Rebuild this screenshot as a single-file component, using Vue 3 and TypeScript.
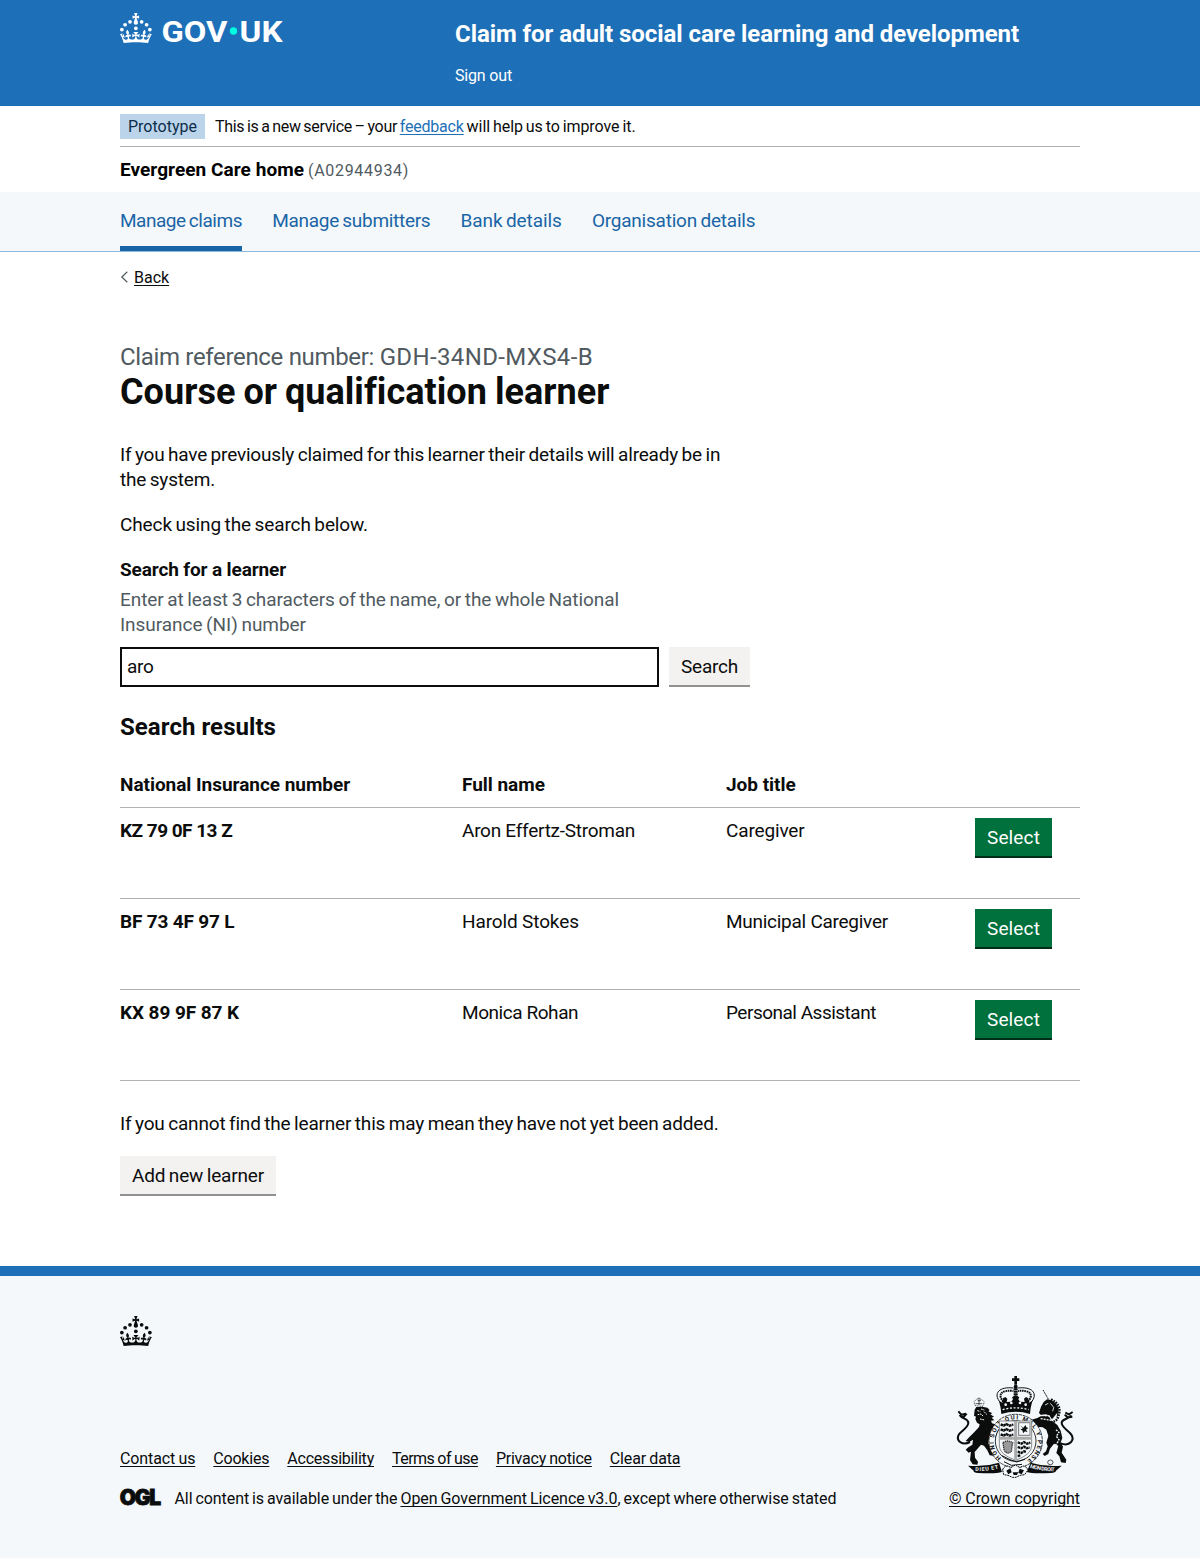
<script setup lang="ts">
interface Label {
  text: string
  tracking: number
}

interface Learner {
  ni: Label
  name: Label
  job: Label
}

const label = (text: string, tracking = 0): Label => ({ text, tracking })
const track = (item: Label) => ({ letterSpacing: `${item.tracking}px` })

const navigation: Label[] = [
  label('Manage claims', -0.477),
  label('Manage submitters', -0.306),
  label('Bank details', -0.117),
  label('Organisation details', -0.22),
]

const learners: Learner[] = [
  { ni: label('KZ 79 0F 13 Z', -0.52), name: label('Aron Effertz-Stroman', -0.263), job: label('Caregiver', -0.15) },
  { ni: label('BF 73 4F 97 L', -0.18), name: label('Harold Stokes', -0.13), job: label('Municipal Caregiver', -0.27) },
  { ni: label('KX 89 9F 87 K', -0.08), name: label('Monica Rohan', -0.44), job: label('Personal Assistant', -0.5) },
]

const footerLinks: Label[] = [
  label('Contact us', -0.12),
  label('Cookies', -0.2),
  label('Accessibility', -0.22),
  label('Terms of use', -0.52),
  label('Privacy notice', -0.23),
  label('Clear data', -0.15),
]

const crown =
  'M33.1,9.8c.2-.1.3-.3.5-.5l4.6,2.4v-6.8l-4.6,1.5c-.1-.2-.3-.3-.5-.5l1.9-5.9h-6.7l1.9,5.9c-.2.1-.3.3-.5.5l-4.6-1.5v6.8l4.6-2.4c.1.2.3.3.5.5l-2.6,8c-.9,2.8,1.2,5.7,4.1,5.7h0c3,0,5.1-2.9,4.1-5.7l-2.6-8ZM37,37.9s-3.4,3.8-4.1,6.1c2.2,0,4.2-.5,6.4-2.8l-.7,8.5c-2-2.8-4.4-4.1-5.7-3.8.1,3.1.5,6.7,5.8,7.2,3.7.3,6.7-1.5,7-3.8.4-2.6-2-4.3-3.7-1.6-1.4-4.5,2.4-6.1,4.9-3.2-1.9-4.5-1.8-7.7,2.4-10.9,3,4,2.6,7.3-1.2,11.1,2.4-1.3,6.2,0,4,4.6-1.2-2.8-3.7-2.2-4.2.2-.3,1.7.7,3.7,3,4.2,1.9.3,4.7-.9,7-5.9-1.3,0-2.4.7-3.9,1.7l2.4-8c.6,2.3,1.4,3.7,2.2,4.5.6-1.6.5-2.8,0-5.3l5,1.8c-2.6,3.6-5.2,8.7-7.3,17.5-7.4-1.1-15.7-1.7-24.5-1.7h0c-8.8,0-17.1.6-24.5,1.7-2.1-8.9-4.7-13.9-7.3-17.5l5-1.8c-.5,2.5-.6,3.7,0,5.3.8-.8,1.6-2.3,2.2-4.5l2.4,8c-1.5-1-2.6-1.7-3.9-1.7,2.3,5,5.2,6.2,7,5.9,2.3-.4,3.3-2.4,3-4.2-.5-2.4-3-3.1-4.2-.2-2.2-4.6,1.6-6,4-4.6-3.7-3.7-4.2-7.1-1.2-11.1,4.2,3.2,4.3,6.4,2.4,10.9,2.5-2.8,6.3-1.3,4.9,3.2-1.8-2.7-4.1-1-3.7,1.6.3,2.3,3.3,4.1,7,3.8,5.4-.5,5.7-4.2,5.8-7.2-1.3-.2-3.7,1-5.7,3.8l-.7-8.5c2.2,2.3,4.2,2.7,6.4,2.8-.7-2.3-4.1-6.1-4.1-6.1h10.6,0Z'
const jewels: [number, number][] = [
  [20, 17.6], [10.2, 23.5], [3.7, 33.2], [31.7, 30.6], [43.3, 17.6], [53.2, 23.5], [59.7, 33.2],
]
</script>

<template>
  <div class="page">
    <header class="header">
      <div class="wrap header-row">
        <svg class="logo" viewBox="0 0 324 60" width="162" height="30" role="img" aria-label="GOV.UK">
          <g fill="#fff">
            <circle v-for="([x, y], i) in jewels" :key="i" :cx="x" :cy="y" r="3.7" />
            <path :d="crown" />
            <text x="83" y="58" textLength="132" lengthAdjust="spacingAndGlyphs" class="logo-text">GOV</text>
            <text x="239" y="58" textLength="86" lengthAdjust="spacingAndGlyphs" class="logo-text">UK</text>
          </g>
          <circle cx="227" cy="36" r="7.3" fill="#00ffe0" />
        </svg>
        <div class="header-content">
          <p class="service">Claim for adult social care learning and development</p>
          <p class="signout">Sign out</p>
        </div>
      </div>
    </header>

    <div class="wrap">
      <div class="phase">
        <span class="tag">Prototype</span>
        <span><span class="phase-a">This is a new service – your </span><a class="phase-link">feedback</a><span class="phase-b"> will help us to improve it.</span></span>
      </div>
      <div class="org"><b>Evergreen Care home</b><span>(A02944934)</span></div>
    </div>

    <nav class="nav">
      <div class="wrap nav-row">
        <a v-for="(item, i) in navigation" :key="item.text" :class="{ current: i === 0 }" :style="track(item)">{{ item.text }}</a>
      </div>
    </nav>

    <main class="wrap main">
      <div class="back">
        <svg width="8" height="12" viewBox="0 0 8 12"><path d="M7.3 .8 1.8 6 7.3 11.2" fill="none" stroke="#505a5f" stroke-width="1.2" /></svg>
        <a>Back</a>
      </div>

      <p class="caption">Claim reference number: <span>GDH-34ND-MXS4-B</span></p>
      <h1>Course or qualification learner</h1>
      <p class="intro"><span class="intro-a">If you have previously claimed for this learner their details will already be in</span> <span class="intro-b">the system.</span></p>
      <p class="check">Check using the search below.</p>

      <label class="label" for="learner">Search for a learner</label>
      <p class="hint"><span class="hint-a">Enter at least 3 characters of the name, or the whole National</span> <span class="hint-b">Insurance (NI) number</span></p>
      <div class="search">
        <input id="learner" type="text" value="aro" />
        <button class="btn grey search-btn">Search</button>
      </div>

      <h2>Search results</h2>
      <table>
        <thead>
          <tr><th class="c1">National Insurance number</th><th class="c2">Full name</th><th class="c3">Job title</th><th></th></tr>
        </thead>
        <tbody>
          <tr v-for="row in learners" :key="row.ni.text">
            <th :style="track(row.ni)">{{ row.ni.text }}</th>
            <td :style="track(row.name)">{{ row.name.text }}</td>
            <td :style="track(row.job)">{{ row.job.text }}</td>
            <td><button class="btn green">Select</button></td>
          </tr>
        </tbody>
      </table>

      <p class="missing">If you cannot find the learner this may mean they have not yet been added.</p>
      <button class="btn grey add">Add new learner</button>
    </main>

    <footer class="footer">
      <div class="wrap">
        <svg class="footer-crown" viewBox="0 0 64 60" width="32" height="30" fill="#0b0c0c">
          <circle v-for="([x, y], i) in jewels" :key="i" :cx="x" :cy="y" r="3.7" />
          <path :d="crown" />
        </svg>
        <div class="footer-row">
          <div>
            <div class="links">
              <a v-for="item in footerLinks" :key="item.text" :style="track(item)">{{ item.text }}</a>
            </div>
            <div class="licence">
              <svg width="41" height="18" viewBox="0 0 41 18" role="img" aria-label="OGL">
                <text class="ogl" x="-.3" y="15.6" textLength="41.5">OGL</text>
              </svg>
              <span><span class="lic-a">All content is available under the </span><a class="lic-b">Open Government Licence v3.0</a><span class="lic-c">, except where otherwise stated</span></span>
            </div>
          </div>
          <div class="copyright">
            <svg class="crest" width="125" height="102" viewBox="36 33 375 306">
              <!-- crown -->
              <path d="M223 33h8v7h7v8h-7v11h-8V48h-7v-8h7z" />
              <circle cx="227" cy="65" r="6" />
              <g fill="none" stroke="#0b0c0c">
                <path d="M182 114C156 84 180 64 220 69M272 114C298 84 274 64 234 69" stroke-width="3" />
                <path d="M190 110C170 86 188 74 220 78M264 110C284 86 266 74 234 78" stroke-width="6" stroke-dasharray="5 2" />
                <path d="M227 70v30" stroke-width="12" stroke-dasharray="6 1.5" />
              </g>
              <path d="M177 107l10 6 2-13 7-4 6 5-2 10 14-1 5-7-3-6 11-6 11 6-3 6 5 7 14 1-2-10 6-5 7 4 2 13 10-6-5 22-2 18q-43-13-86 0l-2-18z" />
              <g fill="#f4f8fb">
                <circle cx="197" cy="119" r="4" /><circle cx="214" cy="114" r="4" /><circle cx="240" cy="114" r="4" /><circle cx="257" cy="119" r="4" />
              </g>
              <path d="M188 134q39-11 78 0" fill="none" stroke="#f4f8fb" stroke-width="4" stroke-dasharray="6 5" />

              <!-- lion -->
              <path d="M106 122l-4-12 6-6 9-5 10 6 6 6-5 13z" fill="none" stroke="#0b0c0c" stroke-width="2" stroke-dasharray="3 2" />
              <path d="M113 107h10M117 98v22M107 116h20" stroke="#0b0c0c" stroke-width="2" />
              <path d="M104 134l5-8 18-1 15 3 7 7-4 4 12 6-6 3 11 7-7 3 8 8-10 1 3 8 14 4 13 14-1 11-13 3 10 8-3 6-14-3-10-7-5 7-2 16 6 17 13 14 1 8-16-2-7-15-10-14-9-3-11 13-8 9 1 17 9 12-2 9-14-1-8-13 3-25-7 3-9-9 8-7 12-8 2-15-11 7-11-3 9-10 18-18 13-14 2-8-8-5-5-11 2-7-6-3z" />
              <path d="M112 137l9 2m2-7l10 3m-20 14l10-2 7 7m2-14l9 9m-21 13l14 3" stroke="#f4f8fb" stroke-width="3" stroke-dasharray="5 2" />
              <path d="M90 231C68 243 49 229 55 211 61 198 84 190 85 174 86 160 66 163 59 150M55 139l9 10 14-3M60 153l11 3 9-10" fill="none" stroke="#0b0c0c" stroke-width="6" />

              <!-- unicorn -->
              <path d="M309 75l17 29" stroke="#0b0c0c" stroke-width="3" stroke-dasharray="4 1.5" />
              <path d="M303 125l8-14 10-8 12 2 14 10 9 15-1 18-6 12 3-17-8 10-8 10-7-11-11-4-15 2-6-6z" />
              <path d="M315 120l10-5M331 115l10 12-3 12" stroke="#f4f8fb" stroke-width="2.5" fill="none" />
              <path d="M333 103q29 14 25 40t-20 27" fill="none" stroke="#0b0c0c" stroke-width="7" stroke-dasharray="5 3" />
              <path d="M302 154l23-2 9 14 18 14 10 17 5 22-5 13 7 13-4 18 14 21-2 10-14-2-5-18-9-10 6-22-13-6-12 15-5 16-11 6-6-6 10-8 5-15-4-11 6-20-6-19-11-7-18-2-7 9-8-1 3-15-7-5 4-9 17-5z" />
              <path d="M305 151l25 2m-28 8l34 5m12 28l9 8-8 12 8 10-6 11-10 11-2 10-6 11 1 12-9 8" fill="none" stroke="#f4f8fb" stroke-width="4" stroke-dasharray="6 3" />
              <path d="M362 235C391 246 404 224 394 209 385 195 364 188 365 173 367 160 387 163 393 151M398 141l-11 7-11-5M397 155l-13 2-10-8" fill="none" stroke="#0b0c0c" stroke-width="6" />
              <ellipse cx="331" cy="292" rx="8" ry="7" fill="none" stroke="#0b0c0c" stroke-width="2" />

              <!-- garter and shield -->
              <circle cx="227" cy="228" r="71" fill="none" stroke="#f4f8fb" stroke-width="18" />
              <circle cx="227" cy="228" r="80" fill="none" stroke="#0b0c0c" stroke-width="2.5" stroke-dasharray="9 2" />
              <circle cx="227" cy="228" r="61" fill="#f4f8fb" stroke="#0b0c0c" stroke-width="2.5" />
              <path id="garter" d="M195 287A66 66 0 1 1 259 287" fill="none" />
              <text class="motto"><textPath href="#garter" startOffset="14" textLength="330">HONI SOIT QUI MAL Y PENSE</textPath></text>
              <path d="M178 168h97v75q0 25-48 43-49-18-49-43z" fill="#f4f8fb" stroke="#777" stroke-width="2.5" />
              <g fill="none" stroke="#0b0c0c" stroke-width="7">
                <path d="M182 178l9 4 8-5 9 5 12-3M182 193l9 4 8-5 9 5 12-3M182 208l9 4 8-5 9 5 12-3" stroke-dasharray="8 1.5" />
                <path d="M233 232l11 4 8-5 9 5 10-3M233 246l11 4 8-5 9 5 8-3M233 260l11 4 8-5 6 2M233 273l9-2" stroke-dasharray="8 1.5" />
              </g>
              <path d="M227 168v116M178 220h97" stroke="#aaa" stroke-width="9" />
              <rect x="236" y="173" width="34" height="38" fill="none" stroke="#777" stroke-width="3" />
              <path d="M242 181l7 8 8-9 2 7 6 2-7 5 5 8-8-3-6 6-1-8-7-4 7-2z" />
              <path d="M189 233q14-10 29 0l-4 26q-12 12-22-4z" fill="#999" stroke="#333" stroke-width="4" stroke-dasharray="4 2" />
              <path d="M186 272l24 12 20 7 25-9M192 290l22 11 32-3" fill="none" stroke="#0b0c0c" stroke-width="3" />

              <!-- scroll -->
              <path d="M84 302q48 5 93-9l9 28q-16 6-72 3-14-1-13-7z" />
              <path d="M365 302q-48 5-93-9l-12 28q17 6 73 3 14-1 15-7z" />
              <path id="scrollL" d="M106 318q38 2 74-9" fill="none" />
              <path id="scrollR" d="M269 308q35 11 76 11" fill="none" />
              <text class="scroll"><textPath href="#scrollL" textLength="70">DIEU ET</textPath></text>
              <text class="scroll"><textPath href="#scrollR" textLength="76">MON DROIT</textPath></text>
              <path d="M188 315q2-11 16-12l8 5 14-8 14 8 9-5q12 2 15 12l-10 14-14 2-12 6-11 0-13-6-13-2z" fill="#f4f8fb" stroke="#0b0c0c" stroke-width="3" stroke-dasharray="6 2" />
              <path d="M199 317l12-7 4 12-10 6zM239 311l13 5-7 12-10-5zM218 322h17l-4 8h-10z" />
            </svg>
            <a>© Crown copyright</a>
          </div>
        </div>
      </div>
    </footer>
  </div>
</template>

<style>
body {
  margin: 0;
}
</style>

<style scoped>
.page {
  font: 19px/25px Roboto, "Liberation Sans", sans-serif;
  color: #0b0c0c;
  background: #fff;
}
p,
h1,
h2 {
  margin: 0;
  white-space: nowrap;
}
.wrap {
  width: 960px;
  margin: 0 auto;
}
.header {
  height: 106px;
  background: #1d70b8;
  color: #fff;
}
.header-row {
  display: flex;
}
.logo {
  display: block;
  margin-top: 13px;
  overflow: visible;
}
.logo-text {
  font-weight: 700;
  font-size: 60px;
}
.header-content {
  margin-left: 173px;
}
.service {
  margin-top: 19px;
  font-size: 24px;
  font-weight: 700;
  line-height: 30px;
  letter-spacing: -0.068px;
}
.signout {
  margin-top: 17px;
  font-size: 16px;
  line-height: 20px;
  letter-spacing: -0.17px;
}
.phase {
  display: flex;
  gap: 10px;
  box-sizing: border-box;
  height: 41px;
  padding-top: 8px;
  border-bottom: 1px solid #b1b4b6;
  font-size: 16px;
  line-height: 26px;
  white-space: pre;
}
.tag {
  width: 77px;
  height: 25px;
  padding-left: 8px;
  background: #bbd4ea;
  color: #0c2d4a;
}
.phase-a {
  letter-spacing: -0.307px;
  word-spacing: -1px;
}
.phase-b {
  letter-spacing: -0.063px;
  word-spacing: -1px;
}
.phase-link {
  color: #1d70b8;
  letter-spacing: -0.193px;
}
a {
  text-underline-offset: 2px;
  text-decoration-thickness: 1px;
  text-decoration-skip-ink: none;
}
.phase-link,
.back a,
.links a,
.lic-b,
.copyright a {
  text-decoration-line: underline;
}
.org {
  display: flex;
  align-items: baseline;
  gap: 4px;
  height: 35px;
  padding-top: 10px;
  line-height: 25px;
  letter-spacing: 0.054px;
}
.org b {
  color: #000;
}
.org span {
  color: #505a5f;
  font-size: 16px;
  letter-spacing: 0.689px;
}
.nav {
  background: #f4f8fb;
  border-bottom: 1px solid #8eb8dc;
}
.nav-row {
  display: flex;
  gap: 30.3px;
  height: 59px;
}
.nav a {
  box-sizing: border-box;
  height: 59px;
  padding-top: 16px;
  color: #1a65a6;
  word-spacing: -1px;
}
.nav a.current {
  border-bottom: 5px solid #1a65a6;
}
.main {
  height: 1014px;
}
.back {
  display: flex;
  align-items: center;
  gap: 6px;
  height: 20px;
  padding-top: 15px;
  font-size: 16px;
  line-height: 20px;
}
.back a {
  padding-top: 2px;
}
.caption {
  margin-top: 55px;
  color: #505a5f;
  font-size: 24px;
  line-height: 30px;
  letter-spacing: -0.33px;
}
.caption span {
  letter-spacing: 0.37px;
}
h1 {
  font-size: 36px;
  line-height: 40px;
  letter-spacing: 0.04px;
  word-spacing: -1px;
}
.intro,
.check {
  margin-top: 30px;
  word-spacing: -1px;
}
.intro span,
.hint span {
  display: block;
}
.intro-a {
  letter-spacing: -0.19px;
}
.intro-b {
  letter-spacing: -0.18px;
}
.check {
  margin-top: 20px;
  letter-spacing: -0.117px;
}
.label {
  display: block;
  margin-top: 20px;
  font-weight: 700;
  letter-spacing: -0.128px;
}
.hint {
  margin-top: 5px;
  color: #505a5f;
  word-spacing: -1px;
}
.hint-a {
  letter-spacing: -0.075px;
}
.hint-b {
  letter-spacing: -0.045px;
}
.search {
  display: flex;
  gap: 10px;
  margin-top: 10px;
}
input {
  box-sizing: border-box;
  width: 539px;
  height: 40px;
  padding: 0 5px 2px;
  border: 2px solid #0b0c0c;
  border-radius: 0;
  outline: none;
  background: #fff;
  color: #0b0c0c;
  font: inherit;
  letter-spacing: -0.3px;
}
.btn {
  display: block;
  box-sizing: border-box;
  height: 40px;
  margin: 0;
  padding: 2px 0 0;
  border: 0;
  border-bottom: 2px solid;
  font: inherit;
  white-space: nowrap;
}
.grey {
  background: #f3f2f1;
  border-color: #929191;
  color: #0b0c0c;
}
.green {
  width: 77px;
  background: #00703c;
  border-color: #002d18;
  color: #fff;
  letter-spacing: 0.13px;
}
.search-btn {
  width: 81px;
  padding-top: 1px;
  letter-spacing: -0.229px;
}
h2 {
  margin-top: 25px;
  font-size: 24px;
  line-height: 30px;
  letter-spacing: 0.06px;
}
table {
  width: 960px;
  margin-top: 20px;
  border-collapse: collapse;
  table-layout: fixed;
}
th,
td {
  height: 91px;
  box-sizing: border-box;
  padding: 10px 0 0;
  border-bottom: 1px solid #b1b4b6;
  text-align: left;
  vertical-align: top;
}
thead th {
  height: 45px;
  letter-spacing: -0.03px;
}
.c1 {
  width: 342px;
}
.c2 {
  width: 264px;
}
.c3 {
  width: 249px;
}
.missing {
  margin-top: 30px;
  letter-spacing: -0.173px;
  word-spacing: -1px;
}
.add {
  width: 156px;
  margin-top: 20px;
  letter-spacing: -0.17px;
  word-spacing: -1px;
}
.footer {
  box-sizing: border-box;
  height: 292px;
  padding-top: 40px;
  border-top: 10px solid #1d70b8;
  background: #f4f8fb;
  font-size: 16px;
  line-height: 20px;
}
.footer-crown {
  display: block;
}
.footer-row {
  display: flex;
  justify-content: space-between;
  align-items: flex-end;
  height: 163px;
  white-space: nowrap;
}
.links {
  display: flex;
  gap: 18px;
  margin-bottom: 20px;
  word-spacing: -0.5px;
}
.licence {
  display: flex;
  gap: 13.5px;
  white-space: pre;
  word-spacing: -1px;
}
.licence svg {
  overflow: visible;
}
.ogl {
  fill: #0b0c0c;
  stroke: #0b0c0c;
  stroke-width: 0.8px;
  font-family: Inter, Roboto, sans-serif;
  font-size: 21px;
  font-weight: 900;
}
.lic-a {
  letter-spacing: -0.065px;
}
.lic-b,
.lic-c {
  letter-spacing: -0.04px;
}
.copyright {
  display: flex;
  flex-direction: column;
  align-items: center;
  gap: 11px;
  letter-spacing: -0.087px;
}
.crest {
  display: block;
  fill: #0b0c0c;
}
.motto {
  font-size: 18px;
  font-weight: 700;
}
.scroll {
  fill: #f4f8fb;
  font-size: 16px;
  font-weight: 700;
}
</style>
